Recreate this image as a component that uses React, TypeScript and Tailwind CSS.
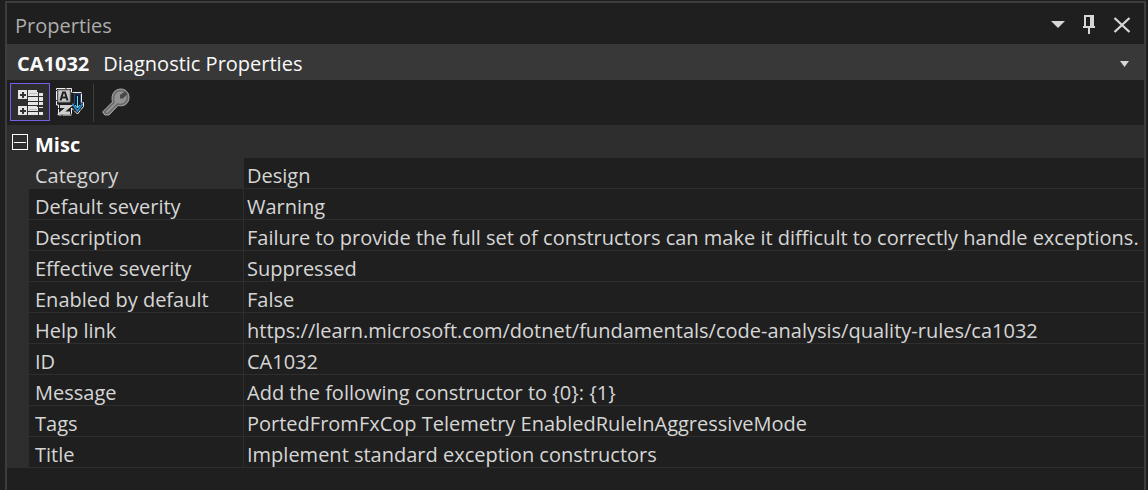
import { useState } from "react";

const rows: [string, string][] = [
  ["Category", "Design"],
  ["Default severity", "Warning"],
  ["Description", "Failure to provide the full set of constructors can make it difficult to correctly handle exceptions."],
  ["Effective severity", "Suppressed"],
  ["Enabled by default", "False"],
  ["Help link", "https://learn.microsoft.com/dotnet/fundamentals/code-analysis/quality-rules/ca1032"],
  ["ID", "CA1032"],
  ["Message", "Add the following constructor to {0}: {1}"],
  ["Tags", "PortedFromFxCop Telemetry EnabledRuleInAggressiveMode"],
  ["Title", "Implement standard exception constructors"],
];

function CategorizedIcon() {
  return (
    <svg width="26" height="26" viewBox="0 0 26 26" shapeRendering="crispEdges" aria-hidden="true">
      <g fill="#e6e6e6">
        <path d="M0 0h9v9H0zM0 16h9v9H0z" />
        <path d="M10 0h9v2h1v4h-10zM10 7h10v4H10zM10 12h10v3H10zM10 16h9v1h1v4H10zM10 22h10v3H10z" />
        <path d="M21 3h4v3h-4zM21 7h4v4h-4zM21 12h4v3h-4zM21 17h4v1h-4zM21 22h4v3h-4z" />
      </g>
      <path d="M4 2h1v2h2v1h-2v2h-1v-2h-2v-1h2zM4 18h1v2h2v1h-2v2h-1v-2h-2v-1h2z" fill="#1a1a1a" stroke="#333" />
      <path d="M11 3.500h8M11 19.500h8" stroke="#bdbdbd" />
    </svg>
  );
}

function SortIcon() {
  return (
    <svg width="28" height="28" viewBox="0 0 28 28" aria-hidden="true">
      <path
        d="M.5.500h15v4h10v10h2v4l-6 7.500-6-6v7H2.500v-10h-2z"
        fill="#1f1f1f"
        stroke="#f0f0f0"
        strokeDasharray="9 1"
      />
      <path d="M2 2h12v12H2z" fill="#c8c8c8" stroke="#8a8a8a" />
      <path d="m4.500 12.500 2.500-8h2l2.500 8M6 9.500h4" fill="none" stroke="#222" strokeWidth="2" />
      <path d="M4 18.500h9l-8 6.500h9" fill="none" stroke="#d0d0d0" strokeWidth="3" />
      <path d="M18.500 6h6v9.500h2l-5 8.500-5-8.500h2z" fill="#101c2c" stroke="#274a78" />
      <path d="m16.500 16 5 7 5-7" fill="none" stroke="#2e8fd0" strokeWidth="1.500" />
      <path d="M21.500 8v12M19 17l2.500 3 2.500-3" fill="none" stroke="#5fe4ff" />
    </svg>
  );
}

function WrenchIcon() {
  return (
    <svg width="28" height="28" viewBox="0 0 28 28" aria-hidden="true">
      <path
        d="M1 23.500 10.500 14C8.500 6 13 1 19 1c4 0 8 3 8 8.500 0 6-5 9.500-11 8L7 27H3l-2-2z"
        fill="#929292"
        stroke="#a4a4a4"
      />
      <path d="M2.500 24 12 14.500C10 7 14 2.500 19 2.500c4 0 6.500 3 6.500 7 0 5-4.500 8-10 6.500L6 25.500H4z" fill="#929292" stroke="#686868" strokeWidth="1.500" />
      <path d="m18 7 5-3.500L25.500 6l-4.500 4.500h-3z" fill="#484848" />
    </svg>
  );
}

export default function App() {
  const [open, setOpen] = useState(true);
  return (
    <div className="min-h-screen bg-[#1f1f1f] pt-px pr-0.5 pl-[5px] font-['Open_Sans','Segoe_UI',sans-serif] text-[20px] leading-[26px] text-[#d6d6d6] flex flex-col">
      <section aria-label="Properties" className="flex-1 flex flex-col border-2 border-b-0 border-[#3d3d3d]">
        <header className="flex h-[41px] items-center justify-between pl-2 pr-[13px]">
          <h1 className="pt-1 text-[#adadad]">Properties</h1>
          <div className="flex items-center gap-[17px] pt-0.5">
            <button type="button" aria-label="Window position" className="flex size-3.5 items-center justify-center">
              <svg width="14" height="7" viewBox="0 0 14 7" aria-hidden="true"><path d="M0 0h14L7 7z" fill="#d6d6d6" /></svg>
            </button>
            <button type="button" aria-label="Auto hide" className="flex h-5 w-3.5 items-center justify-center">
              <svg width="12" height="19" viewBox="0 0 12 19" shapeRendering="crispEdges" aria-hidden="true">
                <path d="M1 0h10v11h1v2H7v6H5v-6H0v-2h1zM3 2v9h4V2z" fill="#d6d6d6" fillRule="evenodd" />
              </svg>
            </button>
            <button type="button" aria-label="Close" className="flex size-[18px] items-center justify-center">
              <svg width="18" height="16" viewBox="0 0 18 16" aria-hidden="true"><path d="m1.500 1 15 14m0-14-15 14" stroke="#d6d6d6" strokeWidth="2.300" /></svg>
            </button>
          </div>
        </header>

        <button type="button" className="flex h-9 w-full items-center justify-between bg-[#383838] pt-[3px] pl-2.5 pr-[15px] text-left text-[#fafafa]">
          <span className="flex gap-3.5">
            <b>CA1032</b>
            <span>Diagnostic Properties</span>
          </span>
          <svg width="9" height="6" viewBox="0 0 9 6" aria-hidden="true"><path d="M0 0h9L4.500 6z" fill="#d6d6d6" /></svg>
        </button>

        <div role="toolbar" className="flex h-[45px] items-start pt-[3px] pl-[3px]">
          <button type="button" aria-label="Categorized" aria-pressed="true" className="flex h-[38px] w-10 items-center justify-center border border-[#7160e8] bg-[#2e2e2e] pl-px pt-px">
            <CategorizedIcon />
          </button>
          <button type="button" aria-label="Alphabetical" className="flex h-[38px] w-10 items-center justify-center">
            <SortIcon />
          </button>
          <span className="mt-px ml-[3px] h-[38px] w-px bg-[#3d3d3d]" />
          <button type="button" aria-label="Property pages" className="ml-0.5 flex h-[38px] w-10 items-center justify-center">
            <WrenchIcon />
          </button>
        </div>

        <table className="w-full table-fixed border-separate border-spacing-0 text-left">
          <colgroup>
            <col className="w-[22px]" />
            <col className="w-[215px]" />
            <col />
          </colgroup>
          <thead>
            <tr className="h-[33px] bg-[#2e2e2e]">
              <th className="p-0 align-top">
                <button
                  type="button"
                  aria-label="Toggle Misc"
                  aria-expanded={open}
                  onClick={() => setOpen(!open)}
                  className="mt-[9px] ml-[5px] flex size-4 items-center justify-center border border-white"
                >
                  <span className="h-px w-3 bg-white" />
                </button>
              </th>
              <th colSpan={2} className="pt-[7px] pr-0 pb-0 pl-1.5 font-bold text-white">Misc</th>
            </tr>
          </thead>
          {open && (
            <tbody className="leading-[25px]">
              {rows.map(([name, value], i) => (
                <tr key={name} className="whitespace-nowrap">
                  <td className="bg-[#2e2e2e] p-0" />
                  <th
                    scope="row"
                    className={
                      i === 0
                        ? "border-r border-b border-[#2e2e2e] bg-[#2e2e2e] pt-[5px] pr-0 pb-0 pl-1.5 font-normal"
                        : "border-r border-b border-[#2e2e2e] pt-[5px] pr-0 pb-0 pl-1.5 font-normal"
                    }
                  >
                    {name}
                  </th>
                  <td className="overflow-hidden border-b border-[#2e2e2e] pt-[5px] pr-0 pb-0 pl-[3px]">{value}</td>
                </tr>
              ))}
            </tbody>
          )}
        </table>
      </section>
    </div>
  );
}
